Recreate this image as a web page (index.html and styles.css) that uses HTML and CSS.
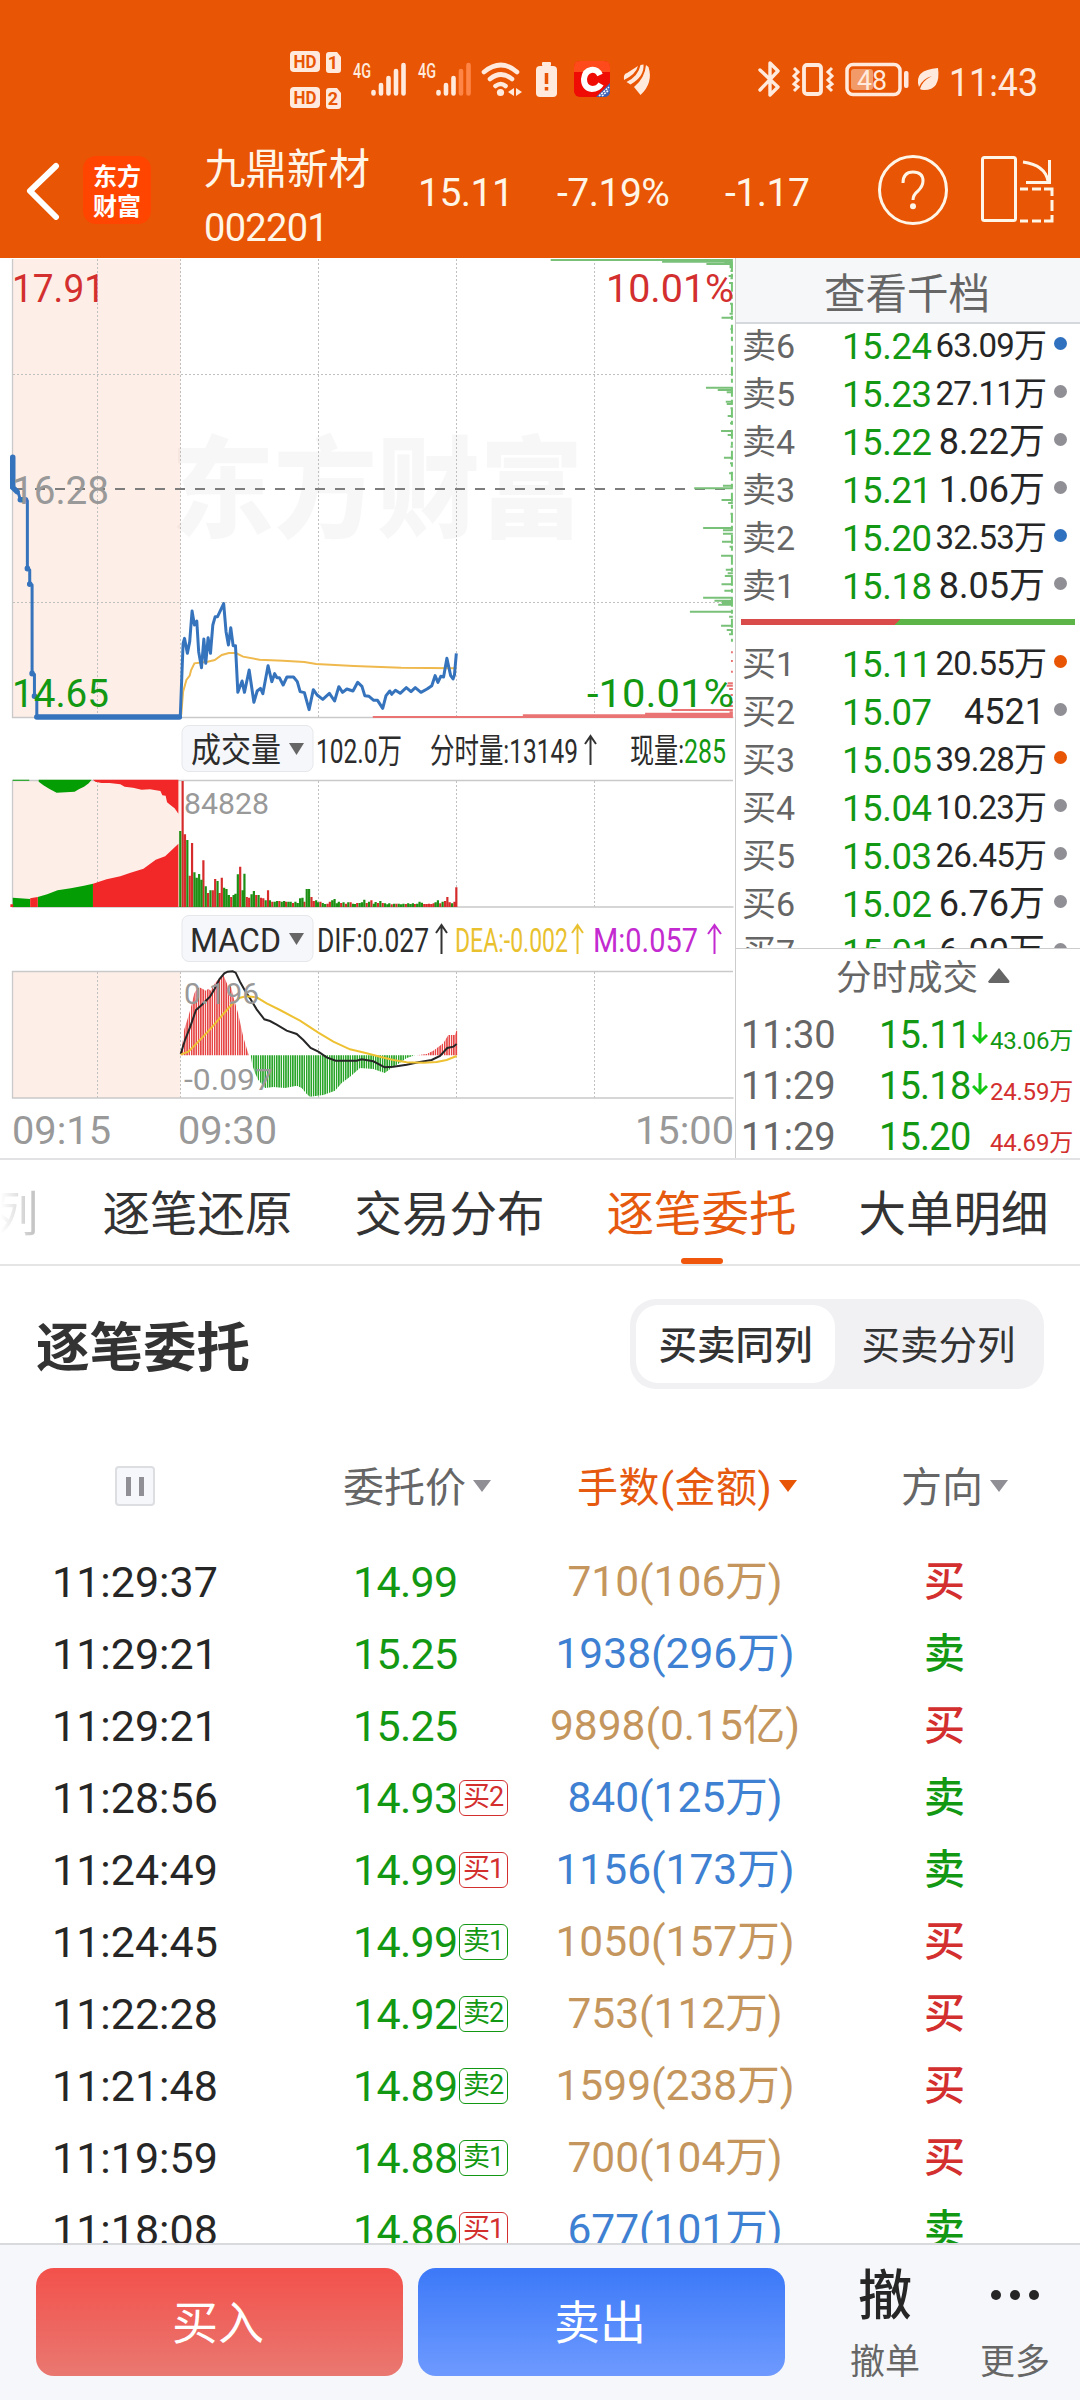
FILE: index.html
```html
<!DOCTYPE html>
<html lang="zh-CN">
<head>
<meta charset="utf-8">
<title>九鼎新材 002201</title>
<link rel="stylesheet" href="styles.css">
</head>
<body>
<div class="app">
<header class="top">
  <svg class="status" viewBox="0 0 1080 130" fill="#ffeadd">
    <rect x="290" y="51" width="30" height="21" rx="4"/><text class="hd" x="305" y="68" textLength="23" lengthAdjust="spacingAndGlyphs">HD</text>
    <rect x="290" y="87" width="30" height="21" rx="4"/><text class="hd" x="305" y="104" textLength="23" lengthAdjust="spacingAndGlyphs">HD</text>
    <path d="M329 52h8l4 5v13q0 3-3 3h-9q-3 0-3-3V55q0-3 3-3zM329 88h8l4 5v13q0 3-3 3h-9q-3 0-3-3V91q0-3 3-3z"/>
    <text class="hd" x="333" y="69">1</text><text class="hd" x="333" y="105">2</text>
    <text class="net" x="353" y="78" textLength="18" lengthAdjust="spacingAndGlyphs">4G</text>
    <text class="net" x="418" y="78" textLength="18" lengthAdjust="spacingAndGlyphs">4G</text>
    <g stroke="#ffeadd" stroke-width="4.6" stroke-linecap="round">
      <path d="M373.500 92v1.500M381 85v8.500M388.500 78v15.500M396 71v22.500M403.500 65v28.500M438.500 92v1.500M446 85v8.500M453.500 78v15.500"/>
      <path stroke="#ff8546" d="M461 71v22.500M468.500 65v28.500"/>
    </g>
    <g fill="none" stroke="#ffeadd" stroke-width="4.600" stroke-linecap="round"><path d="M484 72q17-14 33 0M490 79q11-9 22 0M495.500 86q5.500-4 10 0"/></g>
    <circle cx="500.500" cy="92.500" r="3.600"/><path d="M508 92l6-4v8zM516 88l6 4-6 4z"/>
    <rect x="542" y="62" width="9" height="4" rx="1"/><rect x="536" y="66" width="21" height="31" rx="4"/>
    <path stroke="#e85504" stroke-width="3.500" d="M546.500 73v11M546.500 87v3.500"/>
    <rect x="574" y="61" width="36" height="36" rx="6" fill="#ee0c05"/>
    <path fill="#ff4a1c" d="M574 72v-5q0-6 6-6h24q6 0 6 6v5z"/>
    <path fill="#3f61b4" d="M610 83v8q0 6-6 6h-8z"/><path stroke="#fff" stroke-width="1.500" stroke-dasharray="2 1" d="M599 96l10-9M602 96l7-6"/>
    <path fill="none" stroke="#fff" stroke-width="6" d="M600 75q-3-6-9-5t-7 9q0 9 8 10 6 0 9-5"/>
    <path d="M624 80q-1-6 3-7l11-7q-2 8-14 14zM626.500 82q12-6 14-17l3-.5q1 12-13 20zM634 87q11-9 12-22l2.500 2q5 16-8 28z"/>
    <path fill="none" stroke="#ffeadd" stroke-width="3.400" stroke-linejoin="round" stroke-linecap="round" d="M760 70l18 17-8 8V63l8 8-18 19"/>
    <rect x="804" y="65" width="17" height="29" rx="3" fill="none" stroke="#ffeadd" stroke-width="3.800"/>
    <path fill="none" stroke="#ffeadd" stroke-width="3" d="M794 68l4 4-4 4 4 4-4 4 4 3-4 4M832 68l-4 4 4 4-4 4 4 4-4 3 4 4"/>
    <rect x="847" y="64.500" width="53" height="30" rx="6" fill="none" stroke="#ffeadd" stroke-width="3.500"/>
    <rect x="851" y="69" width="22" height="21" rx="3" fill="#f29a68"/><rect x="904" y="71" width="4.500" height="17" rx="2"/>
    <text class="pct" x="857" y="90" textLength="30" lengthAdjust="spacingAndGlyphs">48</text>
    <path d="M938 68q3 22-14 22-3 0-4-1 2-8 12-13-10 3-13 11-6-17 19-19z"/>
    <text class="clock" x="949" y="96" textLength="89" lengthAdjust="spacingAndGlyphs">11:43</text>
  </svg>
  <div class="nav">
    <svg class="back" viewBox="0 0 36 60"><path d="M31 6L5 31l26 26"/></svg>
    <div class="logo"><span>东方</span><span>财富</span></div>
    <div class="name"><span class="cn">九鼎新材</span><span class="code">002201</span></div>
    <span class="quote">15.11</span><span class="quote q2">-7.19%</span><span class="quote q3">-1.17</span>
    <svg class="help" viewBox="0 0 72 72"><circle cx="36" cy="36" r="33.500"/><path d="M26 29q0-11 10-11t10 9q0 5-5 10-5 4-5 9"/><path class="dot" d="M36 52.200v.1"/></svg>
    <svg class="rotate" viewBox="0 0 76 72"><rect x="2.500" y="3.500" width="33" height="63" rx="2"/><path d="M43 8q22 3 25 19M69.500 6v22.500H46"/><path d="M40 35h8M52 35h9M64 35h8v7M72 46v11M72 61v6h-8M61 67h-9M48 67h-8"/></svg>
  </div>
</header>

<main class="market">
<svg class="chart" viewBox="0 0 735 900">
  <defs>
    <pattern id="redbars" width="2.300" height="10" patternUnits="userSpaceOnUse"><rect width="1.550" height="10" fill="#e64545"/></pattern>
    <pattern id="greenbars" width="2.300" height="10" patternUnits="userSpaceOnUse"><rect width="1.550" height="10" fill="#28a428"/></pattern>
  </defs>
  <path fill="#fdeee7" d="M13 1h167.500v458H13zM13 523h167.500v126H13zM13 714h167.500v126H13z"/>
  <text class="mark" x="171" y="271" textLength="412" lengthAdjust="spacingAndGlyphs">东方财富</text>
  <path class="grid" d="M97.500 1v458M180.500 1v458M318.500 1v458M456.500 1v458M594.500 1v458M13 116.500h720M13 344.500h720M97.500 523v126M318.500 523v126M456.500 523v126M594.500 523v126M97.500 714v126M180.500 714v126M318.500 714v126M456.500 714v126M594.500 714v126"/>
  <path class="frame" d="M12.500 1v458.500h721M733 522.500H12.500v126.500h721M733 713.500H12.500v126.500h721"/>
  <path class="mid" d="M15 231h719"/>
  <g transform="translate(0 -3) scale(.4719 .33333)">
    <path class="depth green" d="M1167 15H1553M1403 20H1553M1497 27H1553M1535 24H1553M1546 31H1553M1546 37H1553M1548 48H1553M1544 63H1553M1548 70H1553M1545 84H1553M1547 146H1553M1546 176H1553M1529 188H1553M1548 222H1553M1550 256H1553M1550 319H1553M1550 357H1553M1496 398H1553M1521 405H1553M1540 412H1553M1538 440H1553M1540 447H1553M1548 460H1553M1542 483H1553M1547 505H1553M1528 528H1553M1542 540H1553M1548 575H1553M1534 608H1553M1547 625H1553M1545 655H1553M1532 692H1553M1471 700H1553M1529 735H1553M1543 744H1553M1548 776H1553M1490 819H1553M1532 826H1553M1532 836H1553M1530 860H1553M1546 875H1553M1528 902H1553M1538 944H1553M1542 955H1553M1536 963H1553M1529 988H1553M1535 1007H1553M1490 1028H1553M1514 1037H1553M1530 1043H1553M1522 1049H1553M1462 1070H1553M1545 1085H1553M1528 1112H1553M1540 1125H1553M1545 1138H1553M1549 1154H1553"/>
    <path class="edge" d="M1551 20V1160"/>
    <path class="depth red" d="M790 1386H1553M1108 1381H1553M1367 1376H1553M1423 1365H1553M1546 1372H1553M1549 1192H1553M1549 1218H1553M1549 1250H1553M1542 1285H1553M1540 1292H1553M1545 1302H1553M1548 1320H1553M1546 1342H1553M1540 1353H1553"/>
    <path class="avg" d="M384 1380L388 1310 395 1275 402 1262 405 1245 412 1225 440 1220 455 1215 470 1200 485 1194 500 1194 515 1205 550 1214 600 1217 645 1221 670 1227 750 1233 850 1238 967 1240"/>
    <path class="price" d="M27 607V697L38 710 43 734 58 737V940L63 945V987L68 990V1255L73 1258V1323L78 1326V1386H382L388 1165 391 1150 397 1195 402 1160 407 1068 412 1110 417 1098 421 1190 427 1238 432 1152 436 1225 441 1148 446 1195 451 1110 456 1085 461 1085 474 1046 479 1130 484 1170 489 1118 494 1172 499 1172 504 1312 513 1278 518 1312 528 1245 538 1342 545 1308 552 1300 557 1316 568 1232 576 1280 582 1256 587 1268 592 1268 600 1290 608 1266 622 1266 630 1280 636 1310 645 1313 655 1364 664 1304 672 1320 684 1333 698 1315 709 1338 718 1295 726 1312 735 1302 748 1308 758 1282 767 1294 773 1322 782 1324 792 1336 800 1336 811 1360 818 1322 826 1308 830 1318 838 1306 848 1315 861 1298 871 1310 880 1298 892 1312 905 1302 915 1292 922 1262 928 1282 934 1264 940 1266 947 1210 955 1262 960 1272 963 1260 967 1195"/>
    <path class="thick" d="M27 607V697L36 710M43 734H54M58 940V941M63 987V988M68 1255V1256M73 1323V1324M78 1386H380"/>
  </g>
  <text class="ax up" x="12" y="44" textLength="93" lengthAdjust="spacingAndGlyphs">17.91</text>
  <text class="ax up" x="606" y="44" textLength="128" lengthAdjust="spacingAndGlyphs">10.01%</text>
  <text class="ax mut" x="12" y="246" textLength="97" lengthAdjust="spacingAndGlyphs">16.28</text>
  <text class="ax down" x="12" y="449" textLength="97" lengthAdjust="spacingAndGlyphs">14.65</text>
  <text class="ax down" x="587" y="449" textLength="147" lengthAdjust="spacingAndGlyphs">-10.01%</text>

  <rect class="pill" x="182" y="467.500" width="131" height="46" rx="7"/>
  <text class="lg" x="191" y="504" textLength="90" lengthAdjust="spacingAndGlyphs">成交量</text><path fill="#666" d="M289 485h15l-7.500 12z"/>
  <text class="lg" x="316" y="505" textLength="86" lengthAdjust="spacingAndGlyphs">102.0万</text>
  <text class="lg" x="430" y="505" textLength="148" lengthAdjust="spacingAndGlyphs">分时量:13149</text>
  <path class="arrow" stroke="#333" d="M590.500 507v-29M585 486l5.500-8 5.500 8"/>
  <text class="lg" x="630" y="505" textLength="54" lengthAdjust="spacingAndGlyphs">现量:</text>
  <text class="lg down" x="684" y="505" textLength="42" lengthAdjust="spacingAndGlyphs">285</text>

  <g transform="translate(0 457) scale(.4719 .33333)">
    <path fill="#049d04" d="M27 194H62V197H27ZM82 194H194L188 205 178 215 168 222 158 230 120 233 105 222 92 211 82 200Z"/>
    <path fill="#f22727" d="M197 194H378V296L370 280 361 270 354 262 351 242 344 241 340 228 318 223 300 224 282 218 264 215 255 208 232 204 215 204 202 200Z"/>
    <path fill="#049d04" d="M27 576V548L64 552V576ZM80 576V546L100 538 122 526 150 520 178 512 197 506V576Z"/>
    <path fill="#f22727" d="M22 576V568H28V576ZM64 576V550L80 546V576ZM197 576V506L226 493 255 484 275 474 304 461 330 434 350 424 368 400 378 386V576Z"/>
    <path class="vol r" d="M387 576V198M392 576V358M402 576V482M407 576V384M431 576V436M441 576V534M451 576V526M456 576V492M465 576V534M470 576V488M490 576V546M509 576V455M523 576V546M528 576V548M543 576V540M553 576V548M558 576V550M568 576V526M577 576V560M592 576V558M606 576V560M621 576V564M645 576V560M660 576V546M665 576V558M679 576V560M694 576V566M699 576V560M723 576V564M733 576V566M743 576V562M757 576V564M777 576V564M787 576V556M801 576V564M811 576V564M830 576V568M840 576V566M860 576V567M879 576V567M899 576V567M904 576V567M909 576V566M914 576V567M919 576V565M933 576V565M943 576V558M948 576V546M953 576V562M963 576V560M967 576V517"/>
    <path class="vol g" d="M382 576V348M397 576V375M412 576V472M417 576V488M422 576V477M427 576V494M436 576V514M446 576V526M461 576V498M475 576V518M480 576V522M485 576V540M495 576V540M499 576V536M504 576V478M514 576V526M518 576V476M533 576V538M538 576V528M548 576V540M563 576V556M572 576V556M582 576V560M587 576V558M597 576V560M602 576V558M611 576V560M616 576V560M626 576V560M631 576V564M636 576V550M641 576V548M650 576V522M655 576V522M670 576V556M674 576V562M684 576V564M689 576V567M704 576V556M709 576V552M714 576V565M718 576V560M728 576V562M738 576V562M748 576V566M752 576V567M762 576V564M767 576V562M772 576V554M782 576V560M792 576V566M796 576V561M806 576V558M816 576V565M821 576V568M825 576V565M835 576V566M845 576V566M850 576V568M855 576V566M865 576V565M870 576V567M875 576V565M884 576V566M889 576V560M894 576V563M923 576V562M928 576V556M938 576V560M958 576V565"/>
  </g>
  <text class="sm mut" x="184" y="556" textLength="85" lengthAdjust="spacingAndGlyphs">84828</text>

  <rect class="pill" x="182" y="657.500" width="131" height="46" rx="7"/>
  <text class="lg" x="190" y="694" textLength="91" lengthAdjust="spacingAndGlyphs">MACD</text><path fill="#666" d="M289 675h15l-7.500 12z"/>
  <text class="lg" x="317" y="694" textLength="112" lengthAdjust="spacingAndGlyphs">DIF:0.027</text><path class="arrow" stroke="#333" d="M441.500 696v-29M436 675l5.500-8 5.500 8"/>
  <text class="lg dea" x="455" y="694" textLength="113" lengthAdjust="spacingAndGlyphs">DEA:-0.002</text><path class="arrow" stroke="#e9c12f" d="M577.500 696v-29M572 675l5.500-8 5.500 8"/>
  <text class="lg mm" x="593" y="694" textLength="105" lengthAdjust="spacingAndGlyphs">M:0.057</text><path class="arrow" stroke="#c32bd0" d="M714.500 696v-29M708 676l6.500-9 6.500 9"/>

  <path fill="url(#redbars)" d="M180.700 797.300L182 788.700 184.300 771.300 186.700 763.700 189.300 755.300 192 745.300 194.300 735.300 196.700 731.300 199.300 729.300 206 732.700 208.300 730.700 210.700 732.700 215 725.300 219.300 720.300 223.300 716.700 228.300 728.700 230.700 727 233.300 738.700 238.300 756 243.300 779.300 248 794.700 249 797.300ZM416.700 797.300L426.700 796 433.300 792.700 443.300 785.300 448.300 777 455 777 456.300 772.700H457.500V797.300Z"/>
  <path fill="url(#greenbars)" d="M250.700 797.300L252.300 807 255 815 258.300 822 261.700 826 265 830 273.300 829 285 830 296.700 827.700 301.700 830 306.700 836 310 838.700 323.300 837 335 832.700 341.700 825 350 818.700 360 810 373.300 811 384.700 815 393.300 808.700 400 804.700 406.700 800 415 797.300Z"/>
  <g transform="translate(160 692) scale(.33333)">
    <path class="dif" d="M62 312L75 270 90 232 108 180 125 165 150 140 165 115 178 88 193 70 203 65 218 64 227 68 240 95 255 122 270 145 290 178 313 208 330 213 350 224 380 242 410 252 430 270 452 294 475 305 500 322 527 332 590 332 605 328 640 334 674 352 700 350 740 344 775 337 815 330 840 318 862 294 880 290 890 282"/>
    <path class="dealine" d="M62 314L85 305 110 280 150 238 190 192 220 158 240 143 260 139 290 142 320 160 360 180 420 212 475 248 520 275 570 298 620 310 660 320 700 330 740 337 790 338 830 336 860 330 890 318"/>
  </g>
  <text class="sm mut" x="184" y="746" textLength="75" lengthAdjust="spacingAndGlyphs">0.196</text>
  <text class="sm mut" x="184" y="832" textLength="89" lengthAdjust="spacingAndGlyphs">-0.097</text>
  <text class="ax mut" x="12" y="886" textLength="99" lengthAdjust="spacingAndGlyphs">09:15</text>
  <text class="ax mut" x="178" y="886" textLength="99" lengthAdjust="spacingAndGlyphs">09:30</text>
  <text class="ax mut" x="635" y="886" textLength="99" lengthAdjust="spacingAndGlyphs">15:00</text>
</svg>

<aside class="book">
  <div class="more-levels">查看千档</div>
  <div class="levels">
    <div class="lv"><i>卖6</i><b>15.24</b><span class="s">63.09万</span><u class="blue"></u></div>
    <div class="lv"><i>卖5</i><b>15.23</b><span class="s">27.11万</span><u></u></div>
    <div class="lv"><i>卖4</i><b>15.22</b><span>8.22万</span><u></u></div>
    <div class="lv"><i>卖3</i><b>15.21</b><span>1.06万</span><u></u></div>
    <div class="lv"><i>卖2</i><b>15.20</b><span class="s">32.53万</span><u class="blue"></u></div>
    <div class="lv"><i>卖1</i><b>15.18</b><span>8.05万</span><u></u></div>
    <div class="ratio"></div>
    <div class="lv"><i>买1</i><b>15.11</b><span class="s">20.55万</span><u class="orange"></u></div>
    <div class="lv"><i>买2</i><b>15.07</b><span>4521</span><u></u></div>
    <div class="lv"><i>买3</i><b>15.05</b><span class="s">39.28万</span><u class="orange"></u></div>
    <div class="lv"><i>买4</i><b>15.04</b><span class="s">10.23万</span><u></u></div>
    <div class="lv"><i>买5</i><b>15.03</b><span class="s">26.45万</span><u></u></div>
    <div class="lv"><i>买6</i><b>15.02</b><span>6.76万</span><u></u></div>
    <div class="lv"><i>买7</i><b>15.01</b><span>6.00万</span><u></u></div>
  </div>
  <div class="ticks-head">分时成交<svg viewBox="0 0 22 15"><path d="M11 0l10.500 13q0 2-1 2H1.500q-2-1-1-2z" fill="#666"/></svg></div>
  <div class="tick"><span>11:30</span><b>15.11</b><svg viewBox="0 0 16 24"><path d="M8 1v20M1 14l7 7 7-7"/></svg><em class="down">43.06万</em></div>
  <div class="tick"><span>11:29</span><b>15.18</b><svg viewBox="0 0 16 24"><path d="M8 1v20M1 14l7 7 7-7"/></svg><em class="up">24.59万</em></div>
  <div class="tick"><span>11:29</span><b>15.20</b><svg viewBox="0 0 16 24"></svg><em class="up">44.69万</em></div>
</aside>
</main>

<nav class="tabs">
  <span class="cut">列</span><span>逐笔还原</span><span>交易分布</span><span class="on">逐笔委托</span><span>大单明细</span>
</nav>

<section class="orders">
  <div class="orders-head">
    <h2>逐笔委托</h2>
    <div class="seg"><span class="sel">买卖同列</span><span>买卖分列</span></div>
  </div>
  <div class="row cols">
    <div class="pause"><i></i><i></i></div>
    <div class="c-price">委托价<s></s></div>
    <div class="c-amt on">手数(金额)<s></s></div>
    <div class="c-dir">方向<s></s></div>
  </div>
  <div class="row"><time>11:29:37</time><p>14.99</p><span class="amt gold">710(106万)</span><strong class="up">买</strong></div>
  <div class="row"><time>11:29:21</time><p>15.25</p><span class="amt azure">1938(296万)</span><strong class="down">卖</strong></div>
  <div class="row"><time>11:29:21</time><p>15.25</p><span class="amt gold">9898(0.15亿)</span><strong class="up">买</strong></div>
  <div class="row"><time>11:28:56</time><p>14.93<small class="up">买2</small></p><span class="amt azure">840(125万)</span><strong class="down">卖</strong></div>
  <div class="row"><time>11:24:49</time><p>14.99<small class="up">买1</small></p><span class="amt azure">1156(173万)</span><strong class="down">卖</strong></div>
  <div class="row"><time>11:24:45</time><p>14.99<small class="down">卖1</small></p><span class="amt gold">1050(157万)</span><strong class="up">买</strong></div>
  <div class="row"><time>11:22:28</time><p>14.92<small class="down">卖2</small></p><span class="amt gold">753(112万)</span><strong class="up">买</strong></div>
  <div class="row"><time>11:21:48</time><p>14.89<small class="down">卖2</small></p><span class="amt gold">1599(238万)</span><strong class="up">买</strong></div>
  <div class="row"><time>11:19:59</time><p>14.88<small class="down">卖1</small></p><span class="amt gold">700(104万)</span><strong class="up">买</strong></div>
  <div class="row"><time>11:18:08</time><p>14.86<small class="up">买1</small></p><span class="amt azure">677(101万)</span><strong class="down">卖</strong></div>
</section>

<footer class="bar">
  <button class="buy">买入</button>
  <button class="sell">卖出</button>
  <div class="act"><span class="big">撤</span><span>撤单</span></div>
  <div class="act"><span class="dots"><i></i><i></i><i></i></span><span>更多</span></div>
</footer>
</div>
</body>
</html>
```
FILE: styles.css
```css
* { box-sizing: border-box; margin: 0; padding: 0; }
body { background: #fff; font-family: Roboto, "Noto Sans CJK SC", sans-serif; color: #262626; }
i, em { font-style: normal; }
svg { display: block; flex: none; }
.app { width: 1080px; height: 2400px; display: flex; flex-direction: column; overflow: hidden; }
.up { color: #d32f2f; fill: #d32f2f; }
.down { color: #129812; fill: #129812; }

/* status bar and title */
.top { height: 258px; background: #e85504; flex: none; }
.status { width: 1080px; height: 130px; }
.hd { font-size: 18px; font-weight: 700; fill: #e85504; text-anchor: middle; }
.net { font-size: 21px; font-weight: 500; }
.pct { font-size: 28px; }
.clock { font-size: 39px; }
.nav { height: 120px; display: flex; align-items: center; padding-left: 25px; color: #fff6e8; }
.back { width: 36px; height: 60px; }
.back path { fill: none; stroke: #fff; stroke-width: 6; stroke-linecap: round; stroke-linejoin: round; }
.logo { width: 68px; height: 68px; margin-left: 22px; border-radius: 13px; background: #ff4500; display: flex; flex-direction: column; align-items: center; justify-content: center; font: 700 24px/30px "Noto Sans CJK SC", sans-serif; color: #fff; }
.name { width: 214px; margin-left: 53px; padding-top: 17px; display: flex; flex-direction: column; white-space: nowrap; }
.cn { font-size: 41.5px; line-height: 58px; }
.code { font-size: 38px; line-height: 58px; letter-spacing: -.7px; }
.quote { width: 139px; font-size: 39px; letter-spacing: -.5px; padding-top: 6px; }
.q2 { width: 168px; }
.q3 { width: 150px; }
.help { width: 72px; height: 72px; margin-left: 2px; }
.rotate { width: 76px; height: 72px; margin-left: 31px; }
.help *, .rotate * { fill: none; stroke: #fff6e8; stroke-width: 3; }
.help .dot { stroke-width: 6; stroke-linecap: round; }

/* intraday chart */
.market { height: 902px; display: flex; flex: none; border-bottom: 2px solid #e2e2e4; }
.chart { width: 735px; height: 900px; }
.grid { fill: none; stroke: #c0c0c0; stroke-width: 1; stroke-dasharray: 2 2; }
.frame { fill: none; stroke: #c9c9c9; stroke-width: 1.300; }
.mid { stroke: #7d7d7d; stroke-width: 1.800; stroke-dasharray: 10 10; }
.mark { font-size: 110px; font-weight: 900; fill: #000; fill-opacity: .03; }
.chart g path { vector-effect: non-scaling-stroke; }
.depth { fill: none; stroke-width: 2; }
.green { stroke: #79c079; }
.red { stroke: #ea7474; }
.edge { stroke: #74c674; stroke-width: 2; stroke-dasharray: 9 3 4 5; }
.avg, .dealine { fill: none; stroke: #efb94e; stroke-width: 2; }
.dealine { stroke: #eec133; }
.price { fill: none; stroke: #3673bd; stroke-width: 3; stroke-linejoin: round; }
.thick { fill: none; stroke: #3673bd; stroke-width: 5.500; stroke-linecap: round; }
.dif { fill: none; stroke: #262626; stroke-width: 2; }
.vol { stroke-width: 2.200; fill: none; }
.r { stroke: #d62b2b; }
.g { stroke: #1d8f14; }
.ax { font-size: 39px; }
.mut { fill: #999; }
.sm { font-size: 30px; }
.lg { font-size: 34px; fill: #2c2c2c; }
.lg.down { fill: #129812; }
.lg.dea { fill: #e9c12f; }
.lg.mm { fill: #c32bd0; }
.arrow { fill: none; stroke-width: 2; }
.pill { fill: #f6f7fa; stroke: #e6e7ea; }

/* order book */
.book { width: 345px; border-left: 1px solid #ccc; display: flex; flex-direction: column; }
.more-levels { height: 66px; background: #f6f7f9; border-bottom: 2px solid #d5d8dc; text-align: center; font-size: 41.500px; line-height: 73px; color: #666; padding-right: 2px; flex: none; }
.levels { height: 625px; overflow: hidden; border-bottom: 1px solid #ccc; flex: none; }
.lv { height: 48px; display: grid; grid-template-columns: 101px 90px 114px 30px; line-height: 48px; font-size: 36.500px; padding-left: 6px; white-space: nowrap; }
.lv i { font-size: 34px; color: #666; line-height: 45px; }
.lv b { font-weight: 400; color: #129812; letter-spacing: -.4px; margin-left: -1px; line-height: 46px; }
.lv span { text-align: right; padding-right: 2px; line-height: 45px; font-size: 36px; }
.lv .s { font-size: 33px; letter-spacing: -.9px; line-height: 43px; padding-right: 1px; margin-left: -6px; }
.lv u { width: 13px; height: 13px; border-radius: 50%; background: #8f8f95; margin: 13px 0 0 7px; }
.lv .blue { background: #2f71bf; }
.lv .orange { background: #e85504; }
.ratio { height: 6px; margin: 7px 5px 17px; background: linear-gradient(135deg, #d94a4a 0 113px, #5eb547 113px); }
.ticks-head { height: 60px; display: flex; justify-content: center; gap: 10px; align-items: center; font-size: 35.500px; line-height: 50px; color: #666; padding: 0 0 3px 30px; flex: none; }
.ticks-head svg { width: 22px; height: 15px; margin-bottom: 5px; }
.tick { height: 51px; display: flex; align-items: center; padding: 0 7px 0 5px; font-size: 38px; white-space: nowrap; color: #666; flex: none; }
.tick span { width: 138px; }
.tick b { width: 93px; font-weight: 400; color: #129812; letter-spacing: -.8px; }
.tick svg { width: 16px; height: 24px; margin-bottom: 4px; }
.tick svg path { fill: none; stroke: #12c812; stroke-width: 3; }
.tick em { flex: 1; text-align: right; font-size: 24px; letter-spacing: -.2px; padding-top: 7px; margin-left: -4px; }

/* tabs */
.tabs { height: 106px; flex: none; border-bottom: 2px solid #e5e5e5; display: flex; font-size: 47.500px; line-height: 111px; color: #333; white-space: nowrap; }
.tabs span { margin-right: 62px; position: relative; height: 106px; }
.tabs .cut { margin: 0 64px 0 -9px; background: linear-gradient(90deg, #fff 20%, #bbb); background-clip: text; color: transparent; }
.tabs .on, .cols .on { color: #e65a10; }
.tabs .on::after { content: ""; position: absolute; left: 74px; bottom: 2px; width: 42px; height: 6px; border-radius: 3px; background: #f0560c; }

/* order list */
.orders { height: 977px; overflow: hidden; flex: none; }
.orders-head { display: flex; justify-content: space-between; align-items: center; height: 90px; margin: 33px 36px 0; }
h2 { font-size: 53.500px; line-height: 90px; font-weight: 700; color: #333; padding-top: 9px; }
.seg { width: 414px; height: 90px; padding: 6px; display: flex; border-radius: 26px; background: #f1f1f4; font-size: 38.500px; line-height: 82px; color: #333; }
.seg span { flex: 1; text-align: center; padding-left: 4px; }
.seg .sel { background: #fff; border-radius: 22px; font-weight: 500; padding: 0; }
.row { height: 72px; display: grid; grid-template-columns: 301px 229px 290px 250px; padding-left: 52px; line-height: 70px; font-size: 43px; white-space: nowrap; }
.cols { height: 80px; margin: 57px 0 21px; line-height: 84px; font-size: 41px; color: #666; }
.pause { width: 40px; height: 40px; margin: 20px 0 0 63px; border: 2px solid #dcdee2; border-radius: 4px; background: #f6f7fa; display: flex; justify-content: center; align-items: center; gap: 8px; }
.pause i { width: 5px; height: 19px; background: #8f8f95; }
.cols s { display: inline-block; border: 9px solid transparent; border-top: 12px solid #8f8f95; border-bottom: 0; margin-left: 7px; vertical-align: 10px; }
.cols .on s { border-top-color: #e85504; }
.c-price { margin-left: -10px; }
.c-amt { margin-left: -5px; letter-spacing: .5px; }
.c-dir { margin-left: 29px; }
.row p { height: 72px; padding-bottom: 2px; color: #129812; display: flex; align-items: center; letter-spacing: -.7px; }
.row small { width: 49px; height: 36px; border: 1.500px solid; border-radius: 6px; font-size: 27px; line-height: 32px; text-align: center; margin-left: 1px; letter-spacing: -1px; }
.amt { width: 290px; margin-left: -52px; text-align: center; font-size: 42.500px; }
.gold { color: #c4965d; }
.azure { color: #3e80d2; }
.row strong { font-weight: 500; font-size: 41px; line-height: 71px; margin-left: 52px; }

/* trade bar */
.bar { height: 157px; flex: none; background: #f6f7fa; border-top: 2px solid #d8dadd; display: flex; padding: 23px 0 0 36px; }
button { width: 367px; height: 108px; border: 0; border-radius: 18px; margin-right: 15px; padding: 0 3px 6px 0; color: #fff; font: 46px/100px "Noto Sans CJK SC", sans-serif; }
.buy { background: linear-gradient(#f3514b, #e97871); }
.sell { background: linear-gradient(#3c79f8, #6e9aff); }
.act { width: 130px; margin-left: 20px; display: flex; flex-direction: column; align-items: center; font-size: 35px; line-height: 44px; color: #666; }
.act + .act { margin-left: 0; }
.big { font-size: 54px; line-height: 58px; font-weight: 500; color: #262626; height: 73px; }
.dots { height: 73px; padding-top: 22px; display: flex; gap: 9px; }
.dots i { width: 10px; height: 10px; border-radius: 50%; background: #262626; }
```
